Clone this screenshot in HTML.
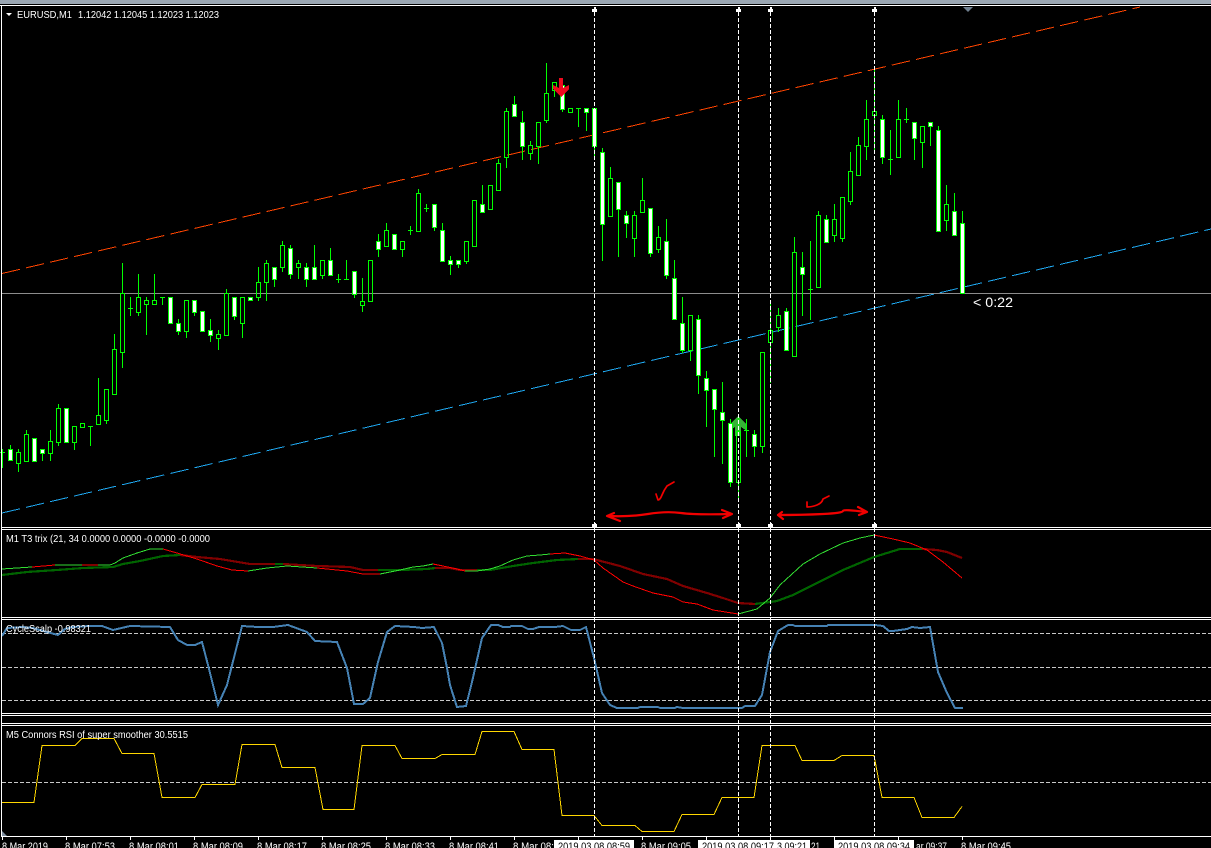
<!DOCTYPE html>
<html><head><meta charset="utf-8"><title>EURUSD,M1</title>
<style>
html,body{margin:0;padding:0;background:#000;width:1211px;height:848px;overflow:hidden}
svg{display:block;position:absolute;left:0;top:0}
text{font-family:"Liberation Sans",sans-serif;font-size:10px;fill:#fff}
.ax{font-size:11px}
.bk{fill:#000;font-size:11px}
</style></head><body>
<svg width="1211" height="848" viewBox="0 0 1211 848">
<rect width="1211" height="848" fill="#000"/>
<!-- channels -->
<g fill="none" stroke-width="1" shape-rendering="crispEdges" stroke-dasharray="18.5 6.2">
<path d="M2 273.5L1140 7" stroke="#ff4500"/>
<path d="M2 513L1211 229" stroke="#1fa8f0"/>
</g>
<path d="M2 293.5H1211" stroke="#8c8c8c" stroke-width="1" shape-rendering="crispEdges"/>
<!-- green up arrow -->
<polygon points="738,416 747,425 747,431 741,427 741,436 735,436 735,427 729,431 729,425" fill="#36b436" shape-rendering="crispEdges"/>
<!-- wicks -->
<path shape-rendering="crispEdges" fill="none" stroke="#0f0" stroke-width="1" d="M2.5 449V468M0 452.5h5M10.5 445V461M18.5 449V452M18.5 463V472M26.5 430V434M42.5 453V461M50.5 430V441M50.5 453V461M58.5 404V408M58.5 442V446M74.5 442V450M88 426.5h5M90.5 426V446M98.5 378V415M106.5 420V424M114.5 334V349M122.5 263V293M122.5 352V368M128 308.5h5M130.5 297V316M138.5 274V297M138.5 312V316M146.5 297V300M146.5 304V335M154.5 274V300M160 297.5h5M162.5 297V305M178.5 319V335M186.5 331V338M194.5 312V316M210.5 319V342M218.5 330V334M218.5 338V350M226.5 289V293M234.5 316V320M242.5 323V338M250.5 300V301M258.5 267V282M258.5 297V301M266.5 260V263M266.5 282V301M274.5 279V287M282.5 241V245M282.5 267V272M290.5 245V279M298.5 260V263M298.5 267V279M306.5 263V287M314.5 245V279M322.5 275V279M330.5 248V275M336 279.5h5M338.5 274V283M344 279.5h5M346.5 260V279M354.5 294V298M362.5 278V301M362.5 305V312M378.5 234V257M386.5 223V230M402.5 249V257M408 230.5h5M410.5 226V235M418.5 189V193M424 208.5h5M426.5 204V212M434.5 227V231M442.5 223V230M450.5 256V275M458.5 264V268M466.5 261V264M482.5 185V212M498.5 159V163M506.5 108V111M506.5 157V168M514.5 96V104M522.5 111V160M530.5 141V145M530.5 153V160M538.5 146V164M546.5 63V93M546.5 120V123M554.5 90V97M562.5 85V112M576 108.5h5M578.5 108V127M586.5 112V131M594.5 146V157M602.5 148V261M610.5 167V178M618.5 209V257M626.5 211V238M634.5 211V215M634.5 238V257M642.5 178V200M650.5 253V257M658.5 226V237M658.5 249V253M666.5 219V279M674.5 260V278M682.5 297V353M690.5 350V361M698.5 315V394M706.5 371V427M714.5 409V457M722.5 382V464M730.5 419V487M738.5 417V431M738.5 482V500M744 430.5h5M746.5 419V457M754.5 430V457M762.5 446V453M770.5 304V330M770.5 342V383M778.5 308V315M778.5 327V332M786.5 308V311M794.5 237V252M802.5 252V316M808 289.5h5M810.5 241V320M818.5 211V215M826.5 215V219M834.5 204V219M834.5 235V242M842.5 238V242M850.5 152V171M850.5 201V205M858.5 137V145M866.5 100V119M866.5 146V160M874.5 68V111M874.5 115V152M882.5 115V164M888 159.5h5M890.5 130V175M898.5 100V119M904 119.5h5M906.5 108V123M914.5 138V160M922.5 142V168M930.5 126V146M938.5 126V130M946.5 185V204M946.5 220V231M954.5 193V211M962.5 211V223"/>
<!-- hollow bodies -->
<path shape-rendering="crispEdges" fill="none" stroke="#0f0" stroke-width="1" d="M16.5 452.5h4v11h-4zM24.5 434.5h4v27h-4zM48.5 441.5h4v12h-4zM56.5 408.5h4v34h-4zM72.5 426.5h4v16h-4zM80.5 423.5h4v4h-4zM96.5 415.5h4v9h-4zM104.5 389.5h4v31h-4zM112.5 349.5h4v45h-4zM120.5 293.5h4v59h-4zM136.5 297.5h4v15h-4zM144.5 300.5h4v4h-4zM152.5 300.5h4v4h-4zM184.5 300.5h4v31h-4zM216.5 334.5h4v4h-4zM224.5 293.5h4v42h-4zM240.5 297.5h4v26h-4zM256.5 282.5h4v15h-4zM264.5 263.5h4v19h-4zM280.5 245.5h4v22h-4zM296.5 263.5h4v4h-4zM320.5 260.5h4v15h-4zM360.5 301.5h4v4h-4zM368.5 260.5h4v41h-4zM384.5 230.5h4v16h-4zM400.5 241.5h4v8h-4zM416.5 193.5h4v38h-4zM464.5 241.5h4v20h-4zM472.5 200.5h4v46h-4zM488.5 185.5h4v24h-4zM496.5 163.5h4v27h-4zM504.5 111.5h4v46h-4zM528.5 145.5h4v8h-4zM536.5 122.5h4v24h-4zM544.5 93.5h4v27h-4zM552.5 82.5h4v8h-4zM568.5 108.5h4v4h-4zM608.5 178.5h4v38h-4zM632.5 215.5h4v23h-4zM640.5 200.5h4v12h-4zM656.5 237.5h4v12h-4zM688.5 315.5h4v35h-4zM736.5 431.5h4v51h-4zM760.5 352.5h4v94h-4zM768.5 330.5h4v12h-4zM776.5 315.5h4v12h-4zM792.5 252.5h4v104h-4zM816.5 215.5h4v72h-4zM832.5 219.5h4v16h-4zM840.5 197.5h4v41h-4zM848.5 171.5h4v30h-4zM856.5 145.5h4v30h-4zM864.5 119.5h4v27h-4zM872.5 111.5h4v4h-4zM896.5 119.5h4v38h-4zM920.5 126.5h4v16h-4zM944.5 204.5h4v16h-4z"/>
<!-- filled bodies -->
<path shape-rendering="crispEdges" fill="#fff" stroke="#0f0" stroke-width="1" d="M8.5 449.5h4v11h-4zM32.5 438.5h4v23h-4zM40.5 449.5h4v4h-4zM64.5 408.5h4v34h-4zM168.5 297.5h4v26h-4zM176.5 323.5h4v8h-4zM192.5 300.5h4v12h-4zM200.5 311.5h4v20h-4zM208.5 330.5h4v5h-4zM232.5 297.5h4v19h-4zM248.5 297.5h4v3h-4zM272.5 267.5h4v12h-4zM288.5 248.5h4v26h-4zM304.5 267.5h4v12h-4zM312.5 267.5h4v12h-4zM328.5 260.5h4v15h-4zM352.5 271.5h4v23h-4zM376.5 241.5h4v8h-4zM392.5 234.5h4v15h-4zM432.5 204.5h4v23h-4zM440.5 230.5h4v31h-4zM448.5 260.5h4v4h-4zM456.5 260.5h4v4h-4zM480.5 204.5h4v8h-4zM512.5 104.5h4v12h-4zM520.5 122.5h4v24h-4zM560.5 85.5h4v24h-4zM584.5 108.5h4v4h-4zM592.5 108.5h4v38h-4zM600.5 152.5h4v72h-4zM616.5 182.5h4v27h-4zM624.5 215.5h4v8h-4zM648.5 208.5h4v45h-4zM664.5 241.5h4v34h-4zM672.5 278.5h4v41h-4zM680.5 323.5h4v27h-4zM696.5 319.5h4v56h-4zM704.5 378.5h4v12h-4zM712.5 389.5h4v20h-4zM720.5 412.5h4v8h-4zM728.5 423.5h4v59h-4zM752.5 434.5h4v12h-4zM784.5 311.5h4v39h-4zM800.5 267.5h4v7h-4zM824.5 219.5h4v23h-4zM880.5 119.5h4v38h-4zM912.5 122.5h4v16h-4zM928.5 122.5h4v4h-4zM936.5 130.5h4v101h-4zM952.5 211.5h4v24h-4zM960.5 223.5h4v70h-4z"/>
<!-- red arrow -->
<polygon points="559,78 563,78 563,88 569,85 569,89 561,97 553,89 553,85 559,88" fill="#ee0a1e" shape-rendering="crispEdges"/>
<!-- hand-drawn -->
<g fill="none" stroke="#f20000" stroke-width="2.2" stroke-linecap="round" stroke-linejoin="round">
<path d="M608 516Q630 517 648 514T681 513T731 514M722 510L732 514L723 518M614 513L607 516L620 521"/>
<path d="M778 515Q803 515 823 514T843 511T866 512M858 507L867 512L859 515M782 512L778 515L783 519" />
<path d="M656 494L658 500Q660 500 662 495T667 486L674 482" stroke-width="1.7"/>
<path d="M807 502L807 507Q812 507 817 505T823 499L829 496" stroke-width="1.7"/>
</g>
<!-- trix -->
<g fill="none" shape-rendering="crispEdges" stroke-width="2.2">
<path stroke="#006400" d="M2 575L27 572L57 570L83 568L113 567L123 564L140 561L163 556L180 555M275 564L283 564M378 570L400 570L427 569L435 568M477 570L490 570L513 566L533 563L557 560L578 559M755 604L777 601L793 595L817 583L843 570L874 557L900 549L922 549"/>
<path stroke="#800000" d="M180 555L197 557L220 559L250 564L275 564M283 564L317 566L350 567L363 570L378 570M435 568L450 568L460 570L477 570M578 559L593 559L620 566L643 574L667 579L683 586L707 593L723 598L738 603L755 604M922 549L937 550L947 552L962 558"/>
</g>
<g fill="none" shape-rendering="crispEdges" stroke-width="1">
<path stroke="#32dc32" d="M2 569L32 567M55 565L82 565M98 565L110 565L115 563L123 558L137 553L150 549L163 549M248 571L267 568L287 566L317 568M380 574L400 570L413 567L423 566L433 564M465 571L477 571L490 569L500 566L513 560L527 556L540 555L550 554M738 614L757 609L770 598L780 585L803 564L820 554L843 543L860 538L874 535"/>
<path stroke="#f00" d="M32 567L55 565M82 565L98 565M163 549L177 553L197 559L217 566L232 570L248 571M317 568L347 571L363 574L380 574M433 564L443 566L457 569L465 571M550 554L565 553L580 556L594 560L603 568L623 582L633 586L653 593L673 597L683 602L697 604L713 610L738 614M874 535L893 539L910 543L927 550L943 562L962 578"/>
</g>
<!-- cycle -->
<g shape-rendering="crispEdges">
<path d="M2 633.5H1211M2 667.5H1211M2 700.5H1211" stroke="#c8c8c8" stroke-width="1" stroke-dasharray="4 2"/>
<path fill="none" stroke="#4682b4" stroke-width="2" d="M2 636L7 628L23 627L33 628L43 631L58 635L65 629L72 627L90 626L102 626L113 630L130 626L170 627L178 640L187 645L195 645L202 642L208 665L218 705L227 685L242 626L258 627L273 627L288 625L307 632L315 641L337 642L347 668L354 704L363 704L370 698L378 662L387 632L395 626L414 627L422 628L434 627L442 643L447 668L450 685L457 707L466 706L472 682L482 638L491 625L498 625L503 627L510 627L511 626L522 626L528 629L533 629L539 627L555 627L563 626L571 630L580 630L586 627L594 658L602 693L610 705L617 708L638 708L640 707L658 707L660 708L675 708L677 707L683 708L742 708L745 706L755 706L762 695L770 652L778 631L788 625L793 625L795 626L827 626L828 625L875 625L883 626L889 631L893 631L907 629L912 627L920 628L930 627L938 672L947 693L955 708L963 708"/>
</g>
<!-- rsi -->
<g shape-rendering="crispEdges">
<path d="M2 782.5H1211" stroke="#c8c8c8" stroke-width="1" stroke-dasharray="4 2"/>
<path fill="none" stroke="#ffd700" stroke-width="1" d="M2 802.5L34 802.500L42 745.500L75 745.500L82 738.500L114 738.500L122 753.500L154 753.500L162 797.500L195 797.500L202 784.500L235 784.500L242 744.500L275 744.500L282 767.500L315 767.500L323 809.500L354 809.500L362 745.500L395 745.500L402 758.500L435 758.500L442 754.500L475 754.500L482 731.500L514 731.500L522 749.500L554 749.500L562 815.500L594 815.500L602 825.500L635 825.500L642 831.500L674 831.500L682 814.500L714 814.500L722 797.500L754 797.500L762 745.500L795 745.500L802 760.500L834 760.500L842 755.500L874 755.500L882 797.500L914 797.500L922 817.500L954 817.500L962 806.500"/>
</g>
<polygon points="2,831 7,836 2,836" fill="#7f8fa0"/>
<!-- vertical dashed -->
<path shape-rendering="crispEdges" d="M594.5 12V836M738.5 12V836M770.5 12V836M874.5 12V836" stroke="#fff" stroke-width="1" stroke-dasharray="4 2"/>
<!-- frame -->
<g shape-rendering="crispEdges" fill="#fff">
<rect x="0" y="0" width="1211" height="4" fill="#9aa6b2"/>
<rect x="0" y="5" width="1211" height="1"/>
<rect x="1" y="5" width="1" height="831"/>
<rect x="1" y="527" width="1210" height="1"/>
<rect x="1" y="529" width="1210" height="1"/>
<rect x="1" y="617" width="1210" height="1"/>
<rect x="1" y="619" width="1210" height="1"/>
<rect x="1" y="713" width="1210" height="1"/>
<rect x="1" y="715" width="1210" height="1"/>
<rect x="1" y="723" width="1210" height="1"/>
<rect x="1" y="725" width="1210" height="1"/>
<rect x="1" y="836" width="1210" height="1"/>
<!-- markers -->
<path d="M594 7h2v2h-2zM592 9h5v3h-5zM738 7h2v2h-2zM736 9h5v3h-5zM770 7h2v2h-2zM768 9h5v3h-5zM874 7h2v2h-2zM872 9h5v3h-5z"/>
<path d="M594 523h2v1h-2zM592 524h5v3h-5zM738 523h2v1h-2zM736 524h5v3h-5zM770 523h2v1h-2zM768 524h5v3h-5zM874 523h2v1h-2zM872 524h5v3h-5z"/>
<!-- axis ticks -->
<path d="M2 837h1v3h-1zM66 837h1v3h-1zM130 837h1v3h-1zM194 837h1v3h-1zM258 837h1v3h-1zM322 837h1v3h-1zM386 837h1v3h-1zM450 837h1v3h-1zM514 837h1v3h-1zM578 837h1v3h-1zM642 837h1v3h-1zM706 837h1v3h-1zM770 837h1v3h-1zM834 837h1v3h-1zM898 837h1v3h-1zM962 837h1v3h-1z"/>
</g>
<polygon points="963,7 973,7 968,12" fill="#708090"/>
<polygon points="6,13 12,13 9,16" fill="#fff"/>
<!-- labels -->
<text x="17" y="18" textLength="55" lengthAdjust="spacingAndGlyphs">EURUSD,M1</text>
<text x="78" y="18" textLength="141" lengthAdjust="spacingAndGlyphs">1.12042 1.12045 1.12023 1.12023</text>
<text x="6" y="542" textLength="204" lengthAdjust="spacingAndGlyphs">M1 T3 trix (21, 34 0.0000 0.0000 -0.0000 -0.0000</text>
<text x="6" y="632" textLength="85" lengthAdjust="spacingAndGlyphs">CycleScalp -0.98321</text>
<text x="6" y="738" textLength="182" lengthAdjust="spacingAndGlyphs">M5 Connors RSI of super smoother 30.5515</text>
<text x="973" y="307" style="font-size:14px" textLength="40" lengthAdjust="spacingAndGlyphs">&lt; 0:22</text>
<!-- axis labels -->
<text class="ax" x="2" y="850" textLength="46" lengthAdjust="spacingAndGlyphs">8 Mar 2019</text>
<text class="ax" x="65" y="850" textLength="50" lengthAdjust="spacingAndGlyphs">8 Mar 07:53</text>
<text class="ax" x="129" y="850" textLength="50" lengthAdjust="spacingAndGlyphs">8 Mar 08:01</text>
<text class="ax" x="193" y="850" textLength="50" lengthAdjust="spacingAndGlyphs">8 Mar 08:09</text>
<text class="ax" x="257" y="850" textLength="50" lengthAdjust="spacingAndGlyphs">8 Mar 08:17</text>
<text class="ax" x="321" y="850" textLength="50" lengthAdjust="spacingAndGlyphs">8 Mar 08:25</text>
<text class="ax" x="385" y="850" textLength="50" lengthAdjust="spacingAndGlyphs">8 Mar 08:33</text>
<text class="ax" x="449" y="850" textLength="50" lengthAdjust="spacingAndGlyphs">8 Mar 08:41</text>
<text class="ax" x="513" y="850" textLength="41" lengthAdjust="spacingAndGlyphs">8 Mar 08:</text>
<text class="ax" x="641" y="850" textLength="50" lengthAdjust="spacingAndGlyphs">8 Mar 09:05</text>
<text class="ax" x="811" y="850" textLength="9" lengthAdjust="spacingAndGlyphs">21</text>
<text class="ax" x="916" y="850" textLength="31" lengthAdjust="spacingAndGlyphs">ar 09:37</text>
<text class="ax" x="961" y="850" textLength="50" lengthAdjust="spacingAndGlyphs">8 Mar 09:45</text>
<rect x="554" y="840" width="80" height="8" fill="#fff"/>
<rect x="698" y="840" width="112" height="8" fill="#fff"/>
<rect x="834" y="840" width="80" height="8" fill="#fff"/>
<text class="bk" x="558" y="850" textLength="72" lengthAdjust="spacingAndGlyphs">2019.03.08 08:59</text>
<text class="bk" x="702" y="850" textLength="72" lengthAdjust="spacingAndGlyphs">2019.03.08 09:17</text>
<text class="bk" x="777" y="850" textLength="30" lengthAdjust="spacingAndGlyphs">3 09:21</text>
<text class="bk" x="838" y="850" textLength="72" lengthAdjust="spacingAndGlyphs">2019.03.08 09:34</text>
</svg>
</body></html>
